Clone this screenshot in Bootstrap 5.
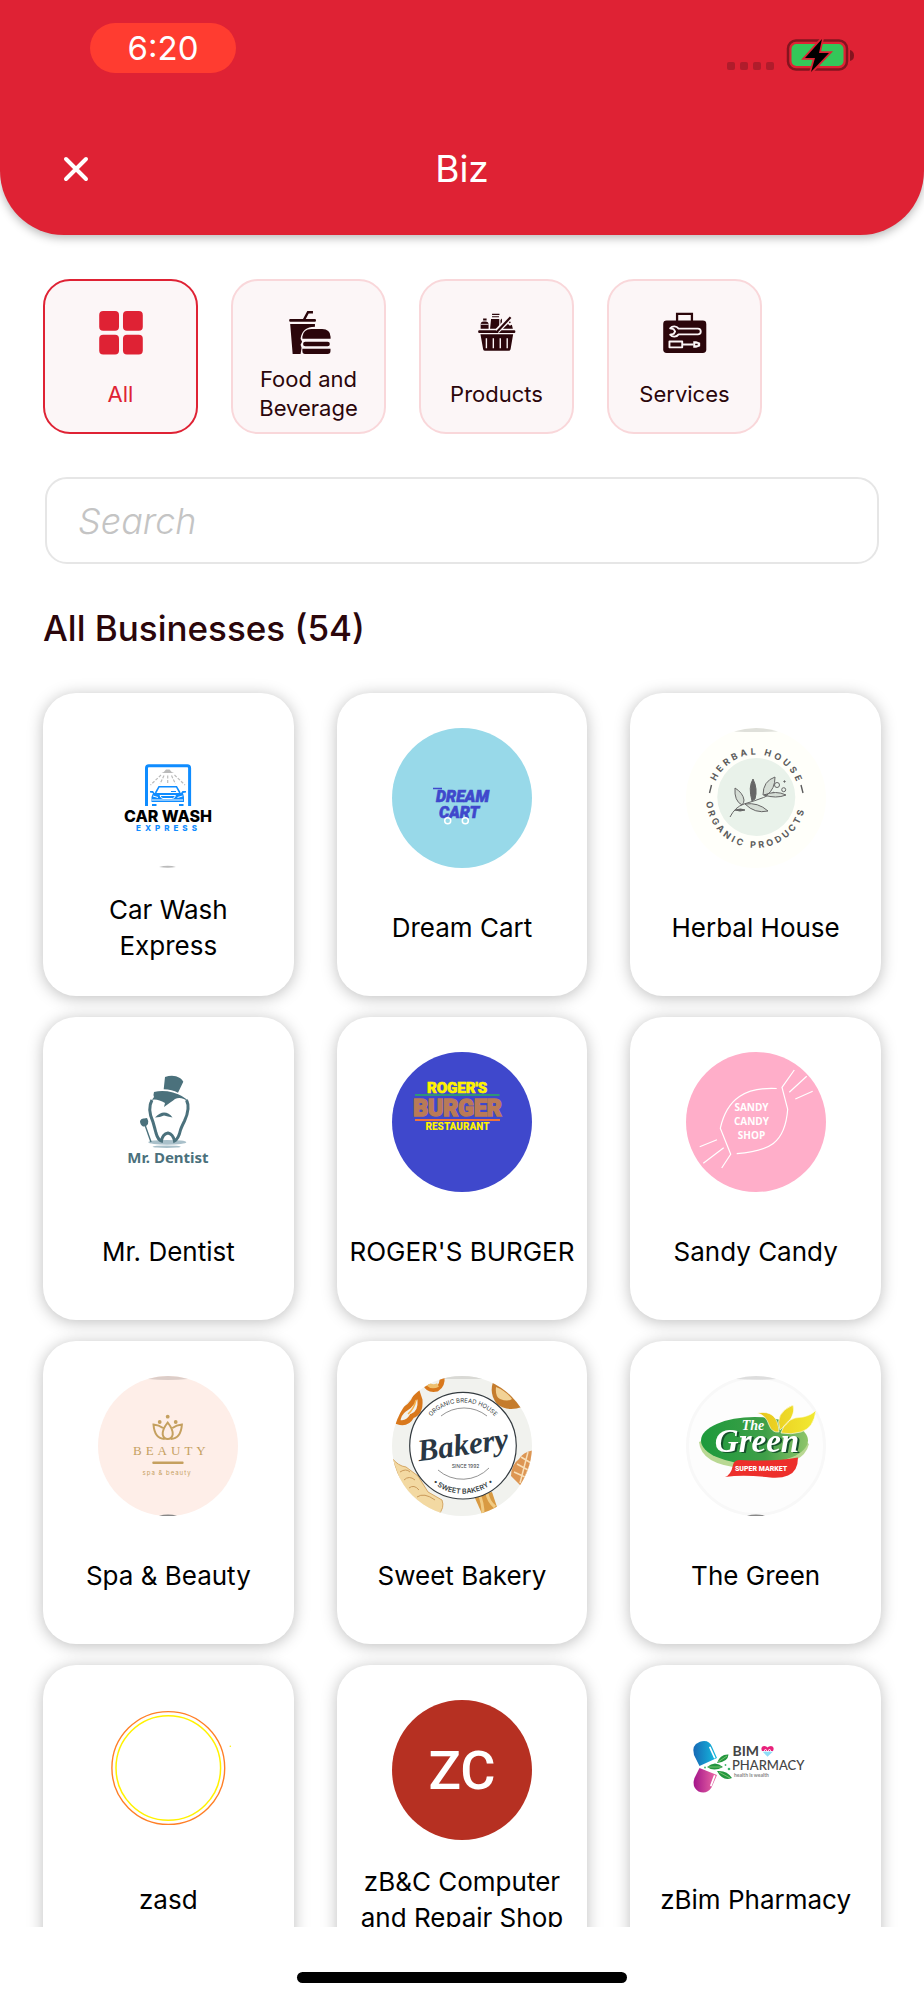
<!DOCTYPE html>
<html lang="en">
<head>
<meta charset="utf-8">
<meta name="viewport" content="width=device-width, initial-scale=1">
<title>Biz</title>
<link href="https://cdn.jsdelivr.net/npm/bootstrap@5.3.0/dist/css/bootstrap.min.css" rel="stylesheet">
<style>
  :root { --brand: #df2234; --ink: #2b060b; }
  body { font-family: Inter, "Noto Sans", sans-serif; color: #000; background: #fff; }
  .app-header { background: var(--brand); border-radius: 0 0 64px 64px; padding: 23px 0 36px; box-shadow: 0 3px 10px rgba(0,0,0,.28); }
  .status-bar { padding: 0 70px 0 90px; height: 50px; margin-bottom: 66px; }
  .clock { background: #ff3c30; border-radius: 25px; width: 146px; height: 50px; font-size: 33px; line-height: 51px; }
  .title-bar { height: 60px; padding: 0 52px; }
  .title-bar h1 { font-size: 37px; line-height: 60px; font-weight: 400; }
  .side { width: 48px; height: 48px; }
  .page-pad { padding-left: 43px; padding-right: 43px; }
  .tabs { gap: 33px; padding-top: 44px; }
  .tab { width: 155px; height: 155px; border: 2px solid #f9d7da; border-radius: 27px; background: #fcf6f7; color: var(--ink); padding: 30px 4px 8px; font-size: 22px; line-height: 29px; }
  .tab.active { border-color: var(--brand); color: var(--brand); }
  .tab-label { height: 60px; margin-top: 10px; }
  .search-row { padding: 43px 2px 0; }
  .search { height: 87px; border: 2px solid #e6e6e6; border-radius: 22px; font-size: 36px; padding: 0 31px; }
  .search::placeholder { color: #c4c4c4; font-style: italic; font-weight: 300; opacity: 1; }
  .section-title { color: var(--ink); font-size: 35px; line-height: 48px; font-weight: 500; margin: 40px 0 0; }
  .biz-grid { --bs-gutter-x: 43px; --bs-gutter-y: 21px; }
  .biz { border-radius: 33px; background: #fff; padding: 35px 6px 32px; box-shadow: 0 2px 16px rgba(0,0,0,.26); color: #000; }
  .biz svg { width: 140px; height: 140px; }
  .biz-name { font-size: 26px; line-height: 36px; height: 72px; margin-top: 24px; }
  .scroller { padding-top: 41px; min-height: 0; }
  .home-bar { height: 73px; padding-bottom: 17px; }
  .home-bar span { width: 330px; height: 11px; border-radius: 6px; background: #000; }
  .heavy { font-family: Roboto, sans-serif; font-weight: 900; }
  .script { font-family: "Liberation Serif", serif; font-style: italic; font-weight: 700; }
  .shaded { filter: drop-shadow(2px 1px 0 #14512a); }
</style>
</head>
<body class="d-flex flex-column vh-100 overflow-hidden">

<header class="app-header text-white flex-shrink-0">
  <div class="status-bar d-flex justify-content-between">
    <div class="clock text-center">6:20</div>
    <svg class="align-self-end" width="128" height="34" viewBox="0 0 128 34" aria-hidden="true">
      <g fill="#b01c2b"><rect x="1" y="23" width="8" height="8" rx="2"/><rect x="14" y="23" width="8" height="8" rx="2"/><rect x="27" y="23" width="8" height="8" rx="2"/><rect x="40" y="23" width="8" height="8" rx="2"/></g>
      <rect x="62" y="1.500" width="59" height="29" rx="8" fill="none" stroke="#84141f" stroke-width="2.500"/>
      <path d="M124 11q4 1 4 5.500t-4 5.500z" fill="#84141f"/>
      <rect x="65.500" y="5" width="52" height="22" rx="5" fill="#34c759"/>
      <path d="M96 0 79 19h10l-4 14 18-19H93z" fill="#000" stroke="#df2234" stroke-width="3.500" paint-order="stroke"/>
    </svg>
  </div>
  <div class="title-bar d-flex align-items-center justify-content-between">
    <button class="btn side p-0 border-0 d-flex align-items-center justify-content-center text-white" aria-label="Close">
      <svg width="26" height="26" viewBox="0 0 26 26"><path d="M3 3 23 23M23 3 3 23" stroke="#fff" stroke-width="4" stroke-linecap="round"/></svg>
    </button>
    <h1 class="m-0">Biz</h1>
    <div class="side"></div>
  </div>
</header>

<nav class="tabs page-pad d-flex flex-shrink-0" aria-label="Categories">
  <button class="tab active d-flex flex-column align-items-center">
    <svg width="44" height="44" viewBox="0 0 44 44" fill="#df2234"><rect width="20" height="20" rx="4"/><rect x="24" width="20" height="20" rx="4"/><rect y="24" width="20" height="20" rx="4"/><rect x="24" y="24" width="20" height="20" rx="4"/></svg>
    <span class="tab-label d-flex align-items-center">All</span>
  </button>
  <button class="tab d-flex flex-column align-items-center">
    <svg width="44" height="44" viewBox="0 0 44 44" fill="#2b060b"><path d="M26 1.200h-5l-4 7.500" fill="none" stroke="#2b060b" stroke-width="2.400"/><rect x="2" y="8" width="27" height="2.800" rx="1"/><path d="M3 13h25v3q-13 0-14.500 12l1.500 3-1.500 3 1 3-1 6.300H5.500z"/><path d="M15.300 28v-2q1-7.700 9-7.700h11q8 0 8.500 7.700v2z"/><rect x="16" y="31" width="27" height="4.500" rx="2.200"/><path d="M15.300 38h28.400v2.500q0 3-3 3H18q-2.700 0-2.700-3z"/></svg>
    <span class="tab-label d-flex align-items-center">Food and<br>Beverage</span>
  </button>
  <button class="tab d-flex flex-column align-items-center">
    <svg width="44" height="44" viewBox="0 0 44 44" fill="#2b060b"><rect x="3" y="19.500" width="37.500" height="2.700" rx="1"/><path d="M5.300 23.500h33l-2.600 15q-.3 1.700-2 1.700H10q-1.700 0-2-1.700z"/><path d="M11.300 27.500v10M18.300 27.500v10M25.300 27.500v10M32.300 27.500v10" stroke="#fcf6f7" stroke-width="1.400"/><path d="M8 7.500h3.500v2h-3.500zM5.500 17.800v-4q0-3.300 3-3.300h2q3 0 3 3.300v4z"/><path d="M5.500 13.500h8" stroke="#fcf6f7" stroke-width=".8"/><path d="M17 3.500h7.500M17 5.800h7" stroke="#2b060b" stroke-width="1.200"/><path d="M16 8h8.300v10H15zM25.500 9l1.500-1.500v5l-1.500 2z"/><path d="M22 20.500 34.500 7" stroke="#fcf6f7" stroke-width="5"/><path d="M21.500 21.500 35.700 6.300" stroke="#2b060b" stroke-width="2.200"/><path d="m28 18 5-5 2 2 2-1 1 4z"/><circle cx="35" cy="11.500" r=".8"/></svg>
    <span class="tab-label d-flex align-items-center">Products</span>
  </button>
  <button class="tab d-flex flex-column align-items-center">
    <svg width="44" height="44" viewBox="0 0 44 44" fill="#2b060b"><path d="M14 10V3h15v7" fill="none" stroke="#2b060b" stroke-width="2.300"/><rect y="9.700" width="43.500" height="32.600" rx="3.500"/><g fill="none" stroke="#fcf6f7" stroke-width="1.900" stroke-linejoin="round"><path d="M15.500 17.800A5.400 5.400 0 0 0 7 17.500l3.500.8 1.500 2.400-1.500 2.400-3.500.8a5.400 5.400 0 0 0 8.500-.3H35a2.900 2.900 0 0 0 0-5.800z"/><path d="M6.300 30.800h12.900v5.900H6.300zM19.500 33.800h11"/></g><path d="M30.300 30.500h3l4 1.500v3.500l-4 1.500h-3z" fill="#fcf6f7"/><path d="M32.300 33.800h2.500" stroke="#2b060b" stroke-width="1.500"/></svg>
    <span class="tab-label d-flex align-items-center">Services</span>
  </button>
</nav>

<div class="page-pad flex-shrink-0">
  <div class="search-row"><input id="q" type="search" class="form-control search" placeholder="Search" aria-label="Search businesses"></div>
  <h2 class="section-title">All Businesses (54)</h2>
</div>

<main class="scroller page-pad flex-grow-1 overflow-hidden">
  <div class="row row-cols-3 biz-grid">
    <div class="col"><a href="#" class="biz d-flex flex-column align-items-center text-decoration-none">
      <svg viewBox="0 0 140 140" role="img" aria-label="Car Wash Express logo">
        <path d="M48.500 78V40q0-2.300 2.300-2.300h38.500q2.300 0 2.300 2.300v38" fill="none" stroke="#0f8cff" stroke-width="3"/>
        <path d="M63.500 45q3-1 4.500-3.500h3.500q1.500 2.500 4.500 3.500z" fill="#bbb"/>
        <path d="M63 47 52.500 57M66 47.500 62 56M69.700 47.500V56M73.500 47.500 77.500 56M76.500 47 87 57" stroke="#bbb" stroke-width="1.200" stroke-dasharray="3 1.500" fill="none"/>
        <path d="M57.500 65l3.500-6.300h17.500L82 65" fill="none" stroke="#0f8cff" stroke-width="1.600"/>
        <path d="M52 63h3l1.500 2H83l1.500-2h3.500v1.500l-3 .5 1 4v5H53.500v-5l1.500-4-3-.5zM54 76h4.500v2H54zM81 76h4.500v2H81z" fill="#0f8cff"/>
        <path d="M55 68l5 1.500M84.500 68l-5 1.500M62 67.500q1 3 3 3h9.500q2 0 3-3zM54 72h31" stroke="#fff" stroke-width="1" fill="#0f8cff"/><path d="M73 63.500h5" stroke="#0f8cff"/>
        <text x="70" y="93.500" text-anchor="middle" font-size="16" font-weight="800">CAR WASH</text>
        <text x="38" y="103" font-size="8" font-weight="800" fill="#0f8cff" letter-spacing="4">EXPRESS</text>
        <path d="M61 139q9-2.500 17 0-8 1.500-17 0" fill="#bbb"/>
      </svg>
      <span class="biz-name d-flex align-items-center text-center">Car Wash<br>Express</span></a></div>

    <div class="col"><a href="#" class="biz d-flex flex-column align-items-center text-decoration-none">
      <svg viewBox="0 0 140 140" role="img" aria-label="Dream Cart logo">
        <circle cx="70" cy="70" r="70" fill="#98d9e9"/>
        <g class="heavy" font-style="italic" fill="#3f48cc" stroke="#3f48cc" stroke-width=".6"><text x="44" y="73.500" font-size="16">DREAM</text><text x="47" y="89.500" font-size="16">CART</text></g>
        <path d="M41 60.500h9" stroke="#3f48cc" stroke-width="1.500"/>
        <g fill="#98d9e9" stroke="#fff" stroke-width="1.500"><circle cx="55.700" cy="92.700" r="3"/><circle cx="73.300" cy="92.700" r="3"/></g>
      </svg>
      <span class="biz-name d-flex align-items-center text-center">Dream Cart</span></a></div>

    <div class="col"><a href="#" class="biz d-flex flex-column align-items-center text-decoration-none">
      <svg viewBox="0 0 140 140" role="img" aria-label="Herbal House logo">
        <circle cx="70" cy="70" r="70" fill="#fffffa"/><path d="M48 3.500Q70-3.500 92 3.500 70 4.500 48 3.500" fill="#dfe0da"/>
        <circle cx="70.300" cy="69" r="39" fill="#e9f2ea"/>
        <path id="hh-top" d="M26.500 70a43.500 43.500 0 0 1 87 0" fill="none"/><path id="hh-bot" d="M20 70a50 50 0 0 0 100 0" fill="none"/>
        <g font-size="9" font-weight="700" fill="#5c5c5c"><text letter-spacing="3"><textPath href="#hh-top" startOffset="17">HERBAL HOUSE</textPath></text><text letter-spacing="3"><textPath href="#hh-bot" startOffset="4">ORGANIC PRODUCTS</textPath></text></g>
        <path d="M25.500 57 23.500 65M115 57l2 8" stroke="#5c5c5c" stroke-width="1.400"/>
        <g fill="none" stroke="#666" stroke-width="1"><path d="M44 89q5-10 14-13 24-7 30-12"/><path d="M56 77q-8-4-7-17 8 5 9 12 0 3-2 5zM77 67q0-14 12-18 0 12-8 18zM78 67q12-5 22 0-10 4-22 0zM59 76q13-2 23 7-13 3-23-7z" fill="#d5ddd5"/><path d="M66 73q-4-14 1-22 5 10 2 20zM49 82q6-2 10 0-5 2-10 0" fill="#666"/><circle cx="91" cy="57" r="2.500"/><circle cx="97.700" cy="61.700" r="2"/><circle cx="98.500" cy="53.500" r=".7" fill="#666"/></g>
      </svg>
      <span class="biz-name d-flex align-items-center text-center">Herbal House</span></a></div>

    <div class="col"><a href="#" class="biz d-flex flex-column align-items-center text-decoration-none">
      <svg viewBox="0 0 140 140" role="img" aria-label="Mr. Dentist logo">
        <ellipse cx="69.300" cy="90.300" rx="19" ry="2.400" fill="#a9c0ca"/><ellipse cx="68.700" cy="94.700" rx="14" ry="1.300" fill="#a9c0ca"/>
        <path d="M67 25q6-2 11-.7 5 1.500 7.300 5.400L80 40.700q-6-3-14.300-3.400z" fill="#4b717c"/>
        <path d="M56 40q9-2 19 .5 11 3 16 9.500-8-6-14-3-4 3-11 8l1-4q-8-5-14-3l-2 4 5-7q-1-2 0-5z" fill="#4b717c"/>
        <path d="M54 48q-5 9 1 22 2 7 3 11 2 7 5.500 8 1-7 6.500-8 5 1 6.500 8 4-2 6-11 1-3 4-9 6-13 2-21" fill="none" stroke="#4b717c" stroke-width="3"/>
        <path d="M57 65.500q5-5 9-5 5 0 8.500 5-5-1-8.500-2-4 2-9 2z" fill="#4b717c"/>
        <path d="M42 69q1-3 4-2.500l3-.5q2 3 1 6-2 3-5 2.500-3-2-3-5.500z" fill="#4b717c"/><path d="m47 73 6 17" stroke="#4b717c" stroke-width="1.400"/>
        <text x="70" y="111" text-anchor="middle" font-family="Noto Sans" font-size="15" font-weight="700" fill="#4b717c">Mr. Dentist</text>
      </svg>
      <span class="biz-name d-flex align-items-center text-center">Mr. Dentist</span></a></div>

    <div class="col"><a href="#" class="biz d-flex flex-column align-items-center text-decoration-none">
      <svg viewBox="0 0 140 140" role="img" aria-label="Roger's Burger Restaurant logo">
        <circle cx="70" cy="70" r="70" fill="#3f48cc"/>
        <g class="heavy" text-anchor="middle"><text x="65" y="40.500" font-size="15" fill="#fff200" stroke="#fff200" stroke-width=".6">ROGER'S</text><text x="65.500" y="64" font-size="23" fill="#b97a57" stroke="#b97a57" stroke-width="1.500">BURGER</text><text x="65.500" y="78.200" font-size="10" fill="#fff200">RESTAURANT</text></g>
        <path d="M23 43h84.500" stroke="#2f9577" stroke-width="2"/><path d="M23 68h85" stroke="#f0743c" stroke-width="1.800"/>
      </svg>
      <span class="biz-name d-flex align-items-center text-center">ROGER'S BURGER</span></a></div>

    <div class="col"><a href="#" class="biz d-flex flex-column align-items-center text-decoration-none">
      <svg viewBox="0 0 140 140" role="img" aria-label="Sandy Candy Shop logo">
        <circle cx="70" cy="70" r="70" fill="#ffaec9"/>
        <path d="M90.700 36.500C60 35 41 46 34.300 76.300L44.700 102.300 35.700 116M50.700 101.700C83 99 99 92 101.700 57.300L96 35.300 108.300 18M103.300 40.300 120.700 24.300M109.300 47 126.700 39.300M13.700 94.700 31 87.700M17.300 111.300 37.700 95.700" fill="none" stroke="#fff" stroke-width="1.200"/>
        <g font-family="Open Sans" font-size="10" font-weight="700" fill="#fff" text-anchor="middle"><text x="65.500" y="59">SANDY</text><text x="65.500" y="73.300">CANDY</text><text x="65.500" y="87.300">SHOP</text></g>
      </svg>
      <span class="biz-name d-flex align-items-center text-center">Sandy Candy</span></a></div>

    <div class="col"><a href="#" class="biz d-flex flex-column align-items-center text-decoration-none">
      <svg viewBox="0 0 140 140" role="img" aria-label="Spa and Beauty logo">
        <circle cx="70" cy="70" r="70" fill="#feeee8"/><path d="M50 3Q70-3 90 3 70 5 50 3" fill="#dccdc8"/><path d="M61 139.500q9-2 18 0-9 1.500-18 0" fill="#888"/>
        <g fill="#c5a05f"><circle cx="69.700" cy="40.700" r="1.900"/><circle cx="61.700" cy="46" r="1.900"/><circle cx="77.700" cy="46" r="1.900"/><rect x="54.300" y="85.500" width="31.300" height="2.400" rx="1"/></g>
        <path d="M69.700 46.500q-5.500 7-5 12 1 4.500 5 4.500t5-4.500q.5-5-5-12zM65 52q-4-3-9.500-3.500 1 14 11 14.500M74.400 52q4-3 9.500-3.500-1 14-11 14.500" fill="none" stroke="#c5a05f" stroke-width="2"/>
        <text x="35" y="79" font-family="Liberation Serif" font-size="13" letter-spacing="4" fill="#c5a05f">BEAUTY</text>
        <text x="44.500" y="98.700" font-size="6" letter-spacing="1" fill="#c5a05f">spa &amp; beauty</text>
      </svg>
      <span class="biz-name d-flex align-items-center text-center">Spa &amp; Beauty</span></a></div>

    <div class="col"><a href="#" class="biz d-flex flex-column align-items-center text-decoration-none">
      <svg viewBox="0 0 140 140" role="img" aria-label="Sweet Bakery logo">
        <clipPath id="bk"><circle cx="70" cy="70" r="70"/></clipPath>
        <g clip-path="url(#bk)"><rect width="140" height="140" fill="#f1f2ee"/>
          <path d="M48 1.500h44" stroke="#d9d9d5" stroke-width="3"/>
          <g fill="none" stroke="#d9781c" stroke-width="5"><path d="M25 15q-2 12-12 18Q6 38 6 46q9 3 14-6 9-3 8-16zM33 7q3 8 12 6 6-4 5-12"/></g>
          <path d="M36 8q4 4 10 1" stroke="#eec06f" stroke-width="4" fill="none"/><path d="M24 24q-2 9-8 14" stroke="#f7b24d" stroke-width="1.500" fill="none"/>
          <path d="M101 6q-4 12 4 22 10 8 25 3Q122 14 101 6z" fill="#c57c2d"/><path d="M104 11q-1 10 4 12 8 3 12 0Q114 15 104 11z" fill="#f2d296"/>
          <path d="M0 82q6 8 14 9l12 9 10 16 14 8q3 8-4 15H20z" fill="#f3d9a2" stroke="#d5a765"/><path d="M8 96q6-4 10 0M12 104q5-5 11 0M17 112q5-4 10 2M25 121q7-5 18 3" stroke="#c9995a" fill="none"/>
          <path d="M144 74q-12 1-17 9-8 6-8 17l10 10q12-3 14-12z" fill="#dd9653"/><path d="M129 81l10 6M125 88l11 6M122 96l11 5M136 76l-8 31M141 82l-9 22" stroke="#f8dfb8" stroke-width="1.500"/>
          <path d="M82 120l18-4 6 18-15 6z" fill="#d99a42"/><path d="M87 118q4 9 4 20M95 117q1 8 8 14" stroke="#f1cb83" stroke-width="3" fill="none"/>
        </g>
        <circle cx="71" cy="69.700" r="53.300" fill="#fff" stroke="#343b40" stroke-width="1.200"/>
        <path d="M49 40a37 37 0 0 1 46 0M46 94a37 37 0 0 0 51-2" fill="none" stroke="#777" stroke-width=".8"/>
        <path id="bk-top" d="M27.500 70a43.500 43.500 0 0 1 87 0" fill="none"/><path id="bk-bot" d="M23 69.700a48 48 0 0 0 96 0" fill="none"/>
        <g fill="#343b40" text-anchor="middle"><text font-size="6"><textPath href="#bk-top" startOffset="50%">ORGANIC BREAD HOUSE</textPath></text><text font-size="7" font-weight="600"><textPath href="#bk-bot" startOffset="50%">• SWEET BAKERY •</textPath></text>
        <text x="73.500" y="92" font-size="5">SINCE 1992</text>
        <text class="script" x="71" y="79" font-size="31" fill="#293744" transform="rotate(-8 71 70)">Bakery</text></g>
      </svg>
      <span class="biz-name d-flex align-items-center text-center">Sweet Bakery</span></a></div>

    <div class="col"><a href="#" class="biz d-flex flex-column align-items-center text-decoration-none">
      <svg viewBox="0 0 140 140" role="img" aria-label="The Green Super Market logo">
        <defs><linearGradient id="gg" x1="0" x2="1"><stop offset="0" stop-color="#1d9a3c"/><stop offset=".6" stop-color="#3f9f48"/><stop offset="1" stop-color="#8fc56a"/></linearGradient><linearGradient id="gy" x1="0" x2="1"><stop offset="0" stop-color="#e8c51b"/><stop offset="1" stop-color="#f2ea31"/></linearGradient></defs>
        <circle cx="70" cy="70" r="68.500" fill="#fdfdfd" stroke="#f8f8f8" stroke-width="3"/><path d="M50 3Q70-3 90 3 70 4.500 50 3" fill="#ddd"/><path d="M61 139.500q9-2 18 0-9 1.500-18 0" fill="#888"/>
        <path d="M13 66q2 23 44 26 60 2 66-24l-5-3-98-2z" fill="#b9d893"/>
        <ellipse cx="68.500" cy="64.500" rx="53.500" ry="23.500" fill="url(#gg)"/>
        <path d="M71 37q21-4 22 19-7 1-10-7-3-10-12-12zM94 54q-6-17 13-25 4 12-13 25zM95 57q4-16 22-16 9-2 13-7-2 18-15 22-10 3-20 1z" fill="url(#gy)" stroke="#fff" stroke-width=".6"/>
        <path d="M39 101q6-2 8-12 1-5 7-5 34 2 58-2.500 0 14-10 18-7 3-18 2-26-3-45-.5z" fill="#ed2f2b"/>
        <g class="script" text-anchor="middle" fill="#fff"><text class="shaded" x="71" y="76" font-size="33">Green</text><text x="67" y="54" font-size="14">The</text></g>
        <text class="heavy" x="75" y="95" text-anchor="middle" font-size="7" fill="#fff">SUPER MARKET</text>
      </svg>
      <span class="biz-name d-flex align-items-center text-center">The Green</span></a></div>

    <div class="col"><a href="#" class="biz d-flex flex-column align-items-center text-decoration-none">
      <svg viewBox="0 0 140 140" role="img" aria-label="zasd logo"><circle cx="70.300" cy="68" r="56.400" fill="none" stroke="#ff7f27" stroke-width="1.400"/><circle cx="70.300" cy="68" r="52.300" fill="none" stroke="#fff200" stroke-width="1.500"/><circle cx="132.300" cy="46.300" r=".8" fill="#fff200"/></svg>
      <span class="biz-name d-flex align-items-center text-center">zasd</span></a></div>

    <div class="col"><a href="#" class="biz d-flex flex-column align-items-center text-decoration-none">
      <svg viewBox="0 0 140 140" role="img" aria-label="ZC"><circle cx="70" cy="70" r="70" fill="#b63022"/><text x="70" y="89.300" text-anchor="middle" font-family="Roboto" font-weight="500" font-size="54" fill="#fff">ZC</text></svg>
      <span class="biz-name d-flex align-items-center text-center">zB&amp;C Computer<br>and Repair Shop</span></a></div>

    <div class="col"><a href="#" class="biz d-flex flex-column align-items-center text-decoration-none">
      <svg viewBox="0 0 140 140" role="img" aria-label="Bim Pharmacy logo">
        <defs><linearGradient id="pb" x1="0" x2="1"><stop offset="0" stop-color="#1769b5"/><stop offset="1" stop-color="#14bde0"/></linearGradient><linearGradient id="pp" x1="0" x2="1"><stop offset="0" stop-color="#a4158a"/><stop offset="1" stop-color="#ee6ba5"/></linearGradient></defs>
        <path d="M13.500 66 8 55q-3-10 6-13.300 9-2.500 12 5L31 58z" fill="url(#pb)"/><path d="m13.500 68-5 10q-3 9 4 13.500 8 3.500 13-4L31 75z" fill="url(#pp)"/>
        <path d="m24 47.500 4.500 10M28.500 76 25 85.500" stroke="#fff" stroke-width="1.800" stroke-linecap="round"/>
        <path d="M31 63q3-9 11.500-8.500Q42 62 31 63zM21 67q8-7 16 0-9 5-16 0zM31 71q10-1 15 7-9 4-15-7z" fill="#24963f"/><path d="M32 62l9-6M22 67h13M33 72l11 6" stroke="#8cd07c" stroke-width=".8"/><g fill="#3cb56a"><circle cx="39.500" cy="65" r=".9"/><circle cx="43" cy="69" r="1.300"/><circle cx="19" cy="67.500" r=".9"/></g>
        <text x="46.500" y="56" font-size="14" font-weight="700" font-family="Lato" fill="#444">BIM</text>
        <path d="M76 51q-2-5 2.500-5 2 0 3 1.500Q82.500 46 85 46q4 .5 2 5z" fill="#e8217b"/><path d="M76.500 51.500H87l-5.500 5.200z" fill="#8fdcf7"/><path d="m77.500 52 2-3 2 3 2-3 2 3" stroke="#fff" stroke-width=".8" fill="none"/>
        <text x="46" y="70.300" font-family="Lato" font-size="13" font-weight="500" fill="#444">PHARMACY</text>
        <text x="48" y="77" font-size="5" font-family="Lato" font-weight="700" fill="#888">health is wealth</text>
      </svg>
      <span class="biz-name d-flex align-items-center text-center">zBim Pharmacy</span></a></div>
  </div>
</main>

<footer class="home-bar d-flex justify-content-center align-items-end flex-shrink-0"><span></span></footer>

<script src="https://cdn.jsdelivr.net/npm/bootstrap@5.3.0/dist/js/bootstrap.bundle.min.js"></script>
</body>
</html>
